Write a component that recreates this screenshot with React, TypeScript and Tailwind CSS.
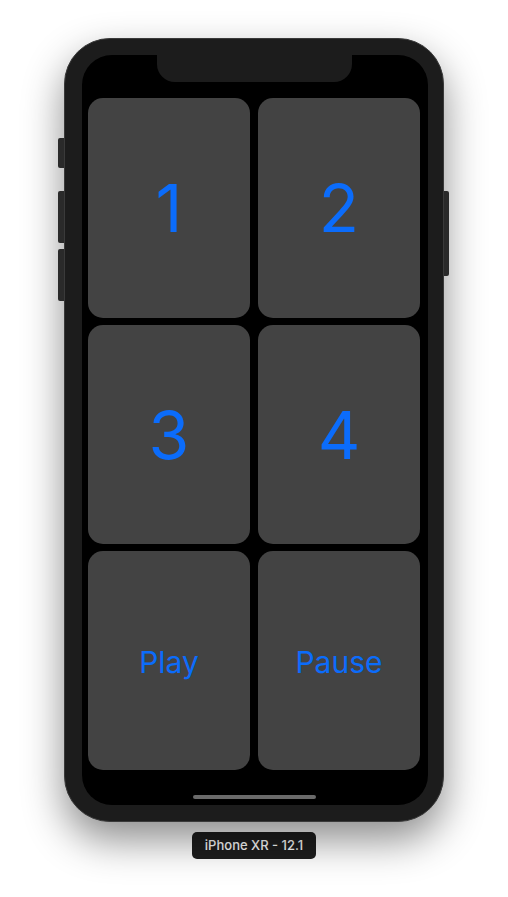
import React from 'react';

const tiles = ['1', '2', '3', '4', 'Play', 'Pause'];

const Tile = ({ label }: { label: string }) => {
  const isNumber = /^\d$/.test(label);
  return (
    <div className="flex items-center justify-center rounded-[15px] bg-[#434343]">
      <span
        className={`text-[#0b6cfb] font-normal ${isNumber ? 'text-[66px] leading-none' : 'text-[30px] leading-none mt-[3px]'}`}
        style={{ fontFamily: 'Inter, "Noto Sans", sans-serif' }}
      >
        {label}
      </span>
    </div>
  );
};

export default function App() {
  return (
    <div className="min-h-screen w-full bg-white flex flex-col items-center pt-[38px]">
      {/* Phone body */}
      <div className="relative w-[380px] h-[784px] rounded-[46px] bg-[#1c1c1c] border border-[#3a3a3a] pl-[17px] pr-[15px] py-[16px] shadow-[0_18px_40px_rgba(0,0,0,0.45)]">
        {/* side buttons */}
        <div className="absolute left-[-7px] top-[99px] w-[6px] h-[30px] rounded-l-[2px] bg-[#2a2a2a]" />
        <div className="absolute left-[-7px] top-[152px] w-[6px] h-[52px] rounded-l-[2px] bg-[#2a2a2a]" />
        <div className="absolute left-[-7px] top-[210px] w-[6px] h-[52px] rounded-l-[2px] bg-[#2a2a2a]" />
        <div className="absolute right-[-6px] top-[152px] w-[5px] h-[85px] rounded-r-[2px] bg-[#2a2a2a]" />

        {/* Screen */}
        <div className="relative w-full h-full rounded-[30px] bg-black flex flex-col pl-[6px] pr-[8px] pt-[43px]">
          {/* Notch */}
          <div className="absolute top-0 left-[75px] w-[195px] h-[27px] rounded-b-[18px] bg-[#1c1c1c]" />

          <div className="grid grid-cols-2 grid-rows-[220px_219px_219px] gap-x-[8px] gap-y-[7px]">
            {tiles.map((t) => (
              <Tile key={t} label={t} />
            ))}
          </div>

          <div className="flex justify-center mt-[25px]">
            <div className="w-[123px] h-[4px] rounded-full bg-[#6a6a6a]" />
          </div>
        </div>
      </div>

      {/* Device label */}
      <div
        className="mt-[10px] px-[13px] h-[27px] flex items-center rounded-[5px] bg-[#1e1e1e] text-white text-[13px] font-medium"
        style={{ fontFamily: 'Inter, "Noto Sans", sans-serif' }}
      >
        iPhone XR - 12.1
      </div>
    </div>
  );
}
